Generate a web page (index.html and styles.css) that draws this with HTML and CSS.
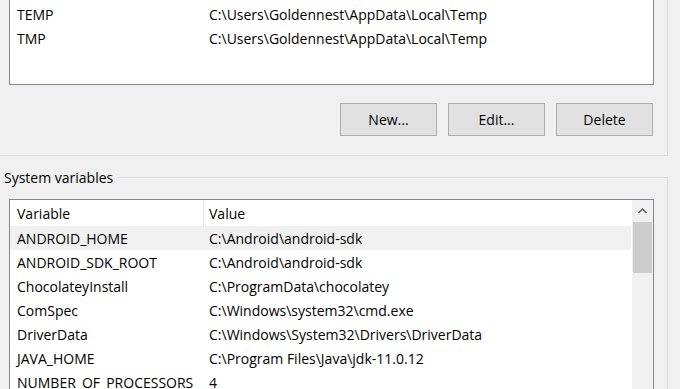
FILE: index.html
```html
<!DOCTYPE html>
<html lang="en">
<head>
    <meta charset="UTF-8" />
    <title>Environment Variables</title>
    <link rel="stylesheet" href="styles.css">
</head>
<body>
<div class="user-group">
    <div class="listview top-list">
        <div class="row"><span class="col-var">TEMP</span><span class="col-val">C:\Users\Goldennest\AppData\Local\Temp</span></div>
        <div class="row"><span class="col-var">TMP</span><span class="col-val">C:\Users\Goldennest\AppData\Local\Temp</span></div>
    </div>
    <div class="buttons">
        <button class="btn">New...</button>
        <button class="btn">Edit...</button>
        <button class="btn">Delete</button>
    </div>
</div>

<div class="sys-group">
    <div class="group-head">
        <span class="group-title">System variables</span>
        <span class="rule"></span>
    </div>
    <div class="group-body">
        <div class="listview sys-list">
            <div class="rows">
                <div class="row head"><span class="col-var">Variable</span><span class="col-val">Value</span></div>
                <div class="row selected"><span class="col-var">ANDROID_HOME</span><span class="col-val">C:\Android\android-sdk</span></div>
                <div class="row"><span class="col-var">ANDROID_SDK_ROOT</span><span class="col-val">C:\Android\android-sdk</span></div>
                <div class="row"><span class="col-var">ChocolateyInstall</span><span class="col-val">C:\ProgramData\chocolatey</span></div>
                <div class="row"><span class="col-var">ComSpec</span><span class="col-val">C:\Windows\system32\cmd.exe</span></div>
                <div class="row"><span class="col-var">DriverData</span><span class="col-val">C:\Windows\System32\Drivers\DriverData</span></div>
                <div class="row"><span class="col-var">JAVA_HOME</span><span class="col-val">C:\Program Files\Java\jdk-11.0.12</span></div>
                <div class="row"><span class="col-var">NUMBER_OF_PROCESSORS</span><span class="col-val">4</span></div>
            </div>
            <div class="scrollbar">
                <div class="arrow">
                    <svg width="9" height="6" viewBox="0 0 9 6"><polyline points="0.5,5 4.5,1 8.5,5" fill="none" stroke="#606060" stroke-width="1.5"/></svg>
                </div>
                <div class="thumb"></div>
            </div>
        </div>
    </div>
</div>
</body>
</html>
```

FILE: styles.css
```css
* {
  box-sizing: border-box;
}

body {
  margin: 0;
  height: 389px;
  overflow: hidden;
  background-color: #f0f0f0;
  font-family: "Open Sans", sans-serif;
  font-size: 14px;
  color: #000;
}

.user-group {
  width: 668px;
  padding: 0 14px 19px 9px;
  border-right: 1px solid #dcdcdc;
  border-bottom: 1px solid #dcdcdc;
}

.listview {
  width: 645px;
  background-color: #fff;
  border: 1px solid #828790;
}

.top-list {
  height: 85px;
  padding-top: 2px;
  border-top: none;
}

.row {
  display: grid;
  grid-template-columns: 193px 1fr;
  height: 24px;
  align-items: center;
  white-space: nowrap;
}

.col-var {
  padding-left: 7px;
}

.col-val {
  padding-left: 6px;
}

.row.head {
  height: 26px;
  align-items: stretch;
}

.row.head span {
  display: flex;
  align-items: center;
}

.row.head .col-val {
  border-left: 1px solid #e5e5e5;
  padding-left: 5px;
}

.row.selected {
  background-color: #f0f0f0;
  margin-right: 1px;
}

.buttons {
  display: flex;
  justify-content: flex-end;
  gap: 11px;
  margin-top: 18px;
}

.btn {
  width: 97px;
  height: 33px;
  background-color: #e1e1e1;
  border: 1px solid #adadad;
  font-family: inherit;
  font-size: 14px;
  color: #000;
  padding: 0;
}

.sys-group {
  width: 668px;
  margin-top: 12px;
}

.group-head {
  display: flex;
  height: 20px;
}

.group-title {
  padding-left: 4px;
  padding-right: 4px;
  line-height: 20px;
}

.rule {
  flex: 1;
  margin-top: 9px;
  border-top: 1px solid #dcdcdc;
  border-right: 1px solid #dcdcdc;
}

.group-body {
  padding: 11px 0 0 9px;
  border-right: 1px solid #dcdcdc;
  height: 201px;
}

.sys-list {
  display: flex;
  height: 190px;
  border-bottom: none;
}

.rows {
  flex: 1;
  overflow: hidden;
}

.scrollbar {
  width: 21px;
  background-color: #f0f0f0;
}

.arrow {
  height: 22px;
  display: flex;
  align-items: center;
  justify-content: center;
}

.thumb {
  height: 51px;
  margin: 0 1px;
  background-color: #cdcdcd;
}
```
